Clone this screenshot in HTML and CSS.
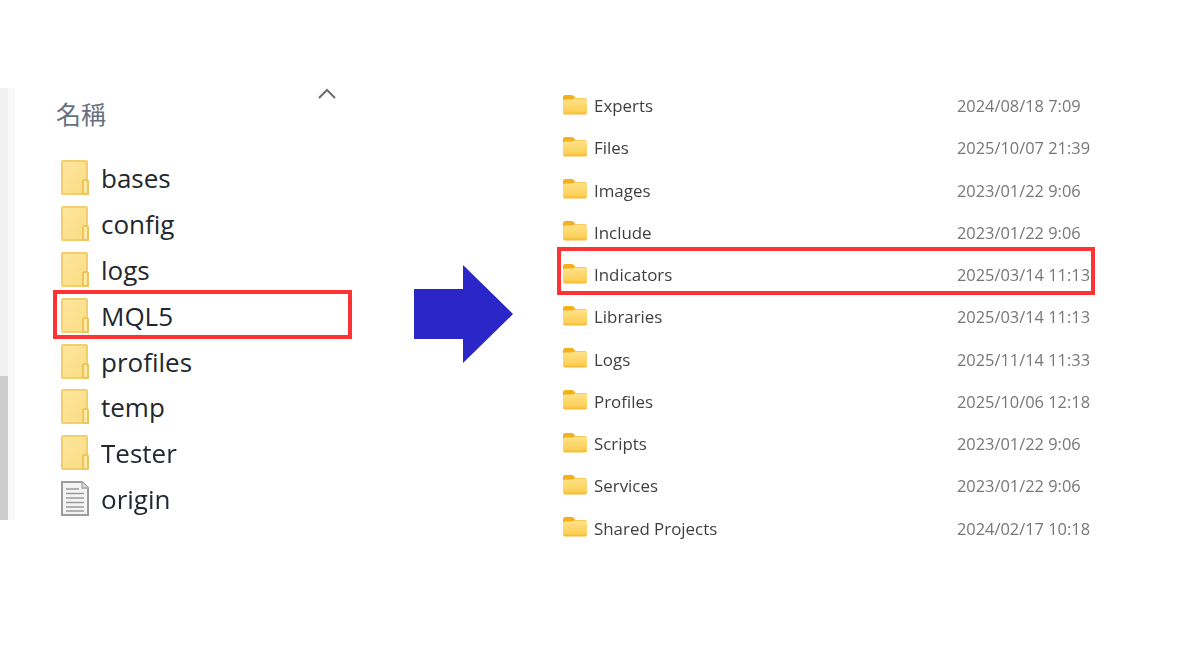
FILE: index.html
```html
<!DOCTYPE html>
<html lang="zh-Hant">
<head>
<meta charset="utf-8">
<title>MQL5</title>
<link rel="stylesheet" href="styles.css">
</head>
<body>
<svg class="defs" width="0" height="0" aria-hidden="true">
  <defs>
    <linearGradient id="lf" x1="0" y1="0" x2="1" y2="1"><stop offset="0" stop-color="#fde69c"/><stop offset="1" stop-color="#fbdc84"/></linearGradient>
    <linearGradient id="rf" x1="0" y1="0" x2="0" y2="1"><stop offset="0" stop-color="#ffe28a"/><stop offset=".8" stop-color="#fdd058"/><stop offset="1" stop-color="#f5b52a"/></linearGradient>
    <symbol id="tall" viewBox="0 0 28 35">
      <path d="M1 2Q1 1 2 1H25Q26 1 26 2V34H2Q1 34 1 33Z" fill="url(#lf)" stroke="#f0cf6c" stroke-width="2"/>
      <path d="M22 34V21.500Q22 20 23.500 20H25.500Q27 20 27 21.500V34Z" fill="#fde8a8" stroke="#ecc65a" stroke-width="2"/>
    </symbol>
    <symbol id="doc" viewBox="0 0 28 35">
      <path d="M1 1H21L27 7V34H1Z" fill="#f4f4f4" stroke="#9c9c9c" stroke-width="2"/>
      <path d="M21 1V7H27" fill="#dcdcdc" stroke="#a8a8a8" stroke-width="1.400"/>
      <path d="M5 8H18M5 12.500H23M5 17H23M5 21.500H23M5 26H23M5 30H23" stroke="#9a9a9a" stroke-width="1.500"/>
    </symbol>
    <symbol id="wide" viewBox="0 0 24 20">
      <path d="M0 2.500Q0 0 2.500 0H8.500Q10 0 11 1.200L12.500 3H21.500Q24 3 24 5.500V9H0Z" fill="#f4b01c"/>
      <path d="M0 6.500Q0 4.500 2 4.500H9.500L11.500 3.500H22Q24 3.500 24 5.500V17.500Q24 19.500 22 19.500H2Q0 19.500 0 17.500Z" fill="url(#rf)"/>
    </symbol>
  </defs>
</svg>
<main class="page">
  <section class="explorer">
    <div class="scrollbar"><div class="thumb"></div></div>
    <div class="pane">
      <header class="head">
        <span class="head-title">名稱</span>
        <svg class="caret" viewBox="0 0 18 11"><path d="M1 10L9 2L17 10" fill="none" stroke="#6e6e6e" stroke-width="2"/></svg>
      </header>
      <ul class="big-list">
        <li class="big-row"><svg class="big-icon"><use href="#tall"/></svg><span>bases</span></li>
        <li class="big-row"><svg class="big-icon"><use href="#tall"/></svg><span>config</span></li>
        <li class="big-row"><svg class="big-icon"><use href="#tall"/></svg><span>logs</span></li>
        <li class="big-row marked"><svg class="big-icon"><use href="#tall"/></svg><span>MQL5</span></li>
        <li class="big-row"><svg class="big-icon"><use href="#tall"/></svg><span>profiles</span></li>
        <li class="big-row"><svg class="big-icon"><use href="#tall"/></svg><span>temp</span></li>
        <li class="big-row"><svg class="big-icon"><use href="#tall"/></svg><span>Tester</span></li>
        <li class="big-row"><svg class="big-icon"><use href="#doc"/></svg><span>origin</span></li>
      </ul>
    </div>
  </section>
  <svg class="arrow" viewBox="0 0 99 98"><path d="M0 24H49V0L99 49L49 98V74H0Z" fill="#2a26c8"/></svg>
  <ul class="small-list">
    <li class="small-row"><svg class="small-icon"><use href="#wide"/></svg><span class="name">Experts</span><span class="date">2024/08/18 7:09</span></li>
    <li class="small-row"><svg class="small-icon"><use href="#wide"/></svg><span class="name">Files</span><span class="date">2025/10/07 21:39</span></li>
    <li class="small-row"><svg class="small-icon"><use href="#wide"/></svg><span class="name">Images</span><span class="date">2023/01/22 9:06</span></li>
    <li class="small-row"><svg class="small-icon"><use href="#wide"/></svg><span class="name">Include</span><span class="date">2023/01/22 9:06</span></li>
    <li class="small-row marked"><svg class="small-icon"><use href="#wide"/></svg><span class="name">Indicators</span><span class="date">2025/03/14 11:13</span></li>
    <li class="small-row"><svg class="small-icon"><use href="#wide"/></svg><span class="name">Libraries</span><span class="date">2025/03/14 11:13</span></li>
    <li class="small-row"><svg class="small-icon"><use href="#wide"/></svg><span class="name">Logs</span><span class="date">2025/11/14 11:33</span></li>
    <li class="small-row"><svg class="small-icon"><use href="#wide"/></svg><span class="name">Profiles</span><span class="date">2025/10/06 12:18</span></li>
    <li class="small-row"><svg class="small-icon"><use href="#wide"/></svg><span class="name">Scripts</span><span class="date">2023/01/22 9:06</span></li>
    <li class="small-row"><svg class="small-icon"><use href="#wide"/></svg><span class="name">Services</span><span class="date">2023/01/22 9:06</span></li>
    <li class="small-row"><svg class="small-icon"><use href="#wide"/></svg><span class="name">Shared Projects</span><span class="date">2024/02/17 10:18</span></li>
  </ul>
</main>
</body>
</html>
```
FILE: styles.css
```css
* { box-sizing: border-box; }
html, body { margin: 0; padding: 0; background: #fff; }
.defs { position: absolute; }
ul { list-style: none; margin: 0; padding: 0; }

.page {
  width: 1180px;
  height: 660px;
  display: flex;
  align-items: flex-start;
  overflow: hidden;
  font-family: "Open Sans", "Noto Sans", sans-serif;
}

/* left: enlarged explorer crop */
.explorer {
  width: 414px;
  margin-top: 88px;
  height: 432px;
  display: flex;
  flex: none;
}
.scrollbar {
  width: 8px;
  height: 100%;
  background: #f0f0f0;
  display: flex;
  flex-direction: column;
  justify-content: flex-end;
}
.thumb { height: 144px; background: #cdcdcd; }
.pane {
  flex: 1;
  background: linear-gradient(to right, #f9f9f9 7px, #fff 7px);
  padding-left: 45px;
  filter: blur(.4px);
}
.head {
  height: 68px;
  width: 300px;
  display: flex;
  justify-content: space-between;
  align-items: flex-start;
  padding-right: 17px;
}
.head-title {
  margin-top: 8px;
  padding-left: 3px;
  font: 25px/34px "Noto Sans CJK TC", sans-serif;
  color: #66717f;
}
.caret { width: 18px; height: 11px; }

.big-list { display: grid; grid-auto-rows: 45.8px; }
.big-row {
  position: relative;
  width: 299px;
  display: flex;
  align-items: center;
  gap: 12px;
  padding: 0 0 1px 8px;
  font-size: 26px;
  color: #23272f;
}
.big-icon { width: 28px; height: 35px; flex: none; margin-top: -1px; }

.marked::after {
  content: "";
  position: absolute;
  inset: -6.500px 0 .75px 0;
  border: 4px solid #ff3333;
}
.big-row.marked::after { inset: -3.500px 0 .7px 0; }

.arrow { width: 99px; height: 98px; flex: none; margin-top: 265px; }

/* right: file list */
.small-list {
  width: 538px;
  flex: none;
  margin-left: 44px;
  margin-top: 84.500px;
  display: grid;
  grid-auto-rows: 42.25px;
  filter: blur(.3px);
}
.small-row {
  position: relative;
  display: flex;
  align-items: center;
  padding-left: 6px;
  font-size: 16.900px;
  color: #3f3f3f;
}
.small-icon { width: 24px; height: 20px; flex: none; margin: -2px 7px 0 0; }
.name { flex: 1; }
.date { width: 138px; flex: none; font-size: 16.400px; color: #777; }
```
